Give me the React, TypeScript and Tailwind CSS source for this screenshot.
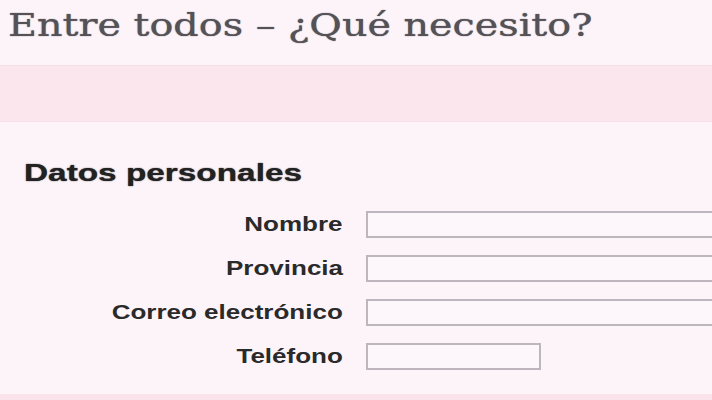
const fields = [
  { label: "Nombre", width: "w-[360px]" },
  { label: "Provincia", width: "w-[360px]" },
  { label: "Correo electrónico", width: "w-[360px]" },
  { label: "Teléfono", width: "w-[175px]" },
];

function Field({ label, width }: { label: string; width: string }) {
  return (
    <div className="flex h-[44px] items-center">
      <div className="flex w-[343px] shrink-0 justify-end">
        <span className="inline-block origin-right scale-x-[1.3] font-['Liberation_Sans',Arial,sans-serif] text-[20px] font-bold leading-none text-[#2a2a2a]">
          {label}
        </span>
      </div>
      <div
        className={`ml-[23px] h-[27px] shrink-0 border-2 border-[#bdb6be] bg-[#fdf6fb] ${width}`}
      />
    </div>
  );
}

export default function App() {
  return (
    <div className="flex h-[400px] w-[712px] flex-col overflow-hidden bg-[#fdf4fa]">
      <h1 className="h-[65px] pl-[8px] pt-[5px] font-['DejaVu_Serif',Cambria,serif] text-[32px] leading-[40px] text-[#555257] [text-shadow:0_0_1px_#555257]">
        <span className="inline-block origin-left scale-x-[1.24]">
          Entre todos – ¿Qué necesito?
        </span>
      </h1>
      <div className="h-[57px] shrink-0 border-y border-[#f6e0e8] bg-[#fbe6ee]" />
      <section className="flex flex-1 flex-col">
        <h2 className="pl-[24px] pt-[36px] font-['Liberation_Sans',Arial,sans-serif] text-[23px] font-bold leading-[30px] text-[#222] [text-shadow:0_0_1px_#222]">
          <span className="inline-block origin-left scale-x-[1.45]">
            Datos personales
          </span>
        </h2>
        <div className="mt-[14px] flex flex-col">
          {fields.map((f) => (
            <Field key={f.label} label={f.label} width={f.width} />
          ))}
        </div>
      </section>
      <div className="h-[6px] shrink-0 bg-[#fbe3ec]" />
    </div>
  );
}
